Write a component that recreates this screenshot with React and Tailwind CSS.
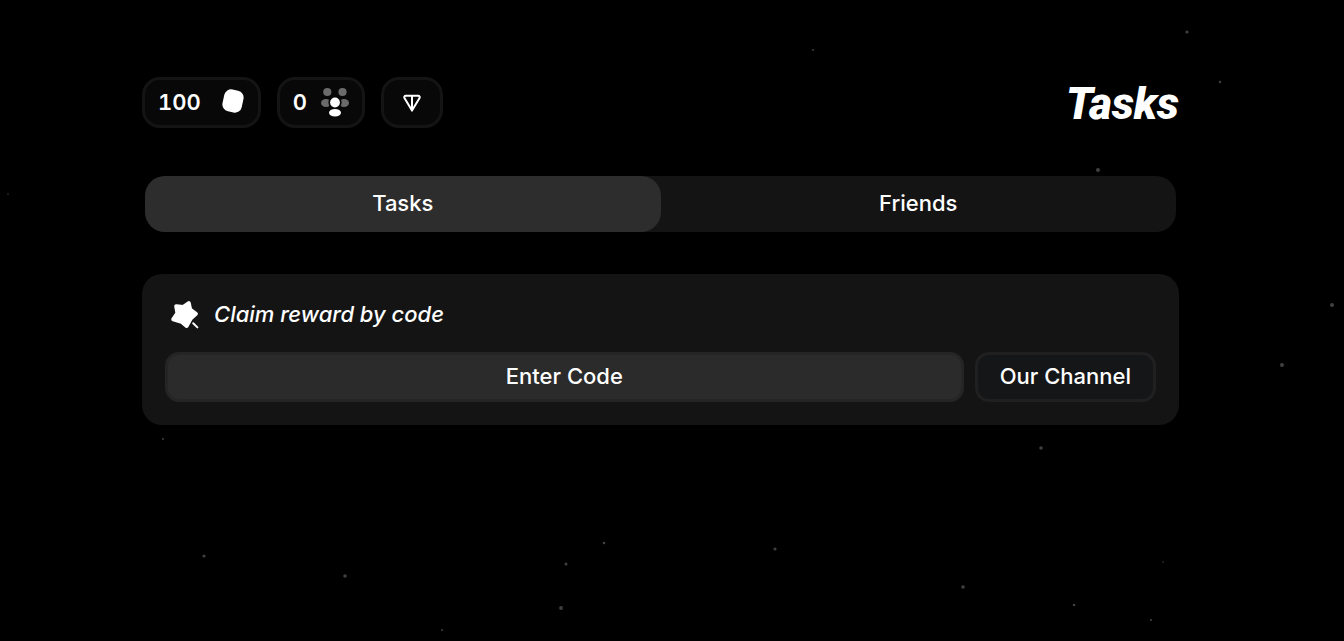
import { useState } from "react";

const stars = [
  [813, 50, 1], [1187, 32, 1.6], [1220, 82, 1.2], [1098, 170, 2], [8, 194, 0.8],
  [1332, 305, 2], [1282, 365, 2], [163, 439, 1], [1041, 448, 1.8], [204, 556, 1.6],
  [345, 576, 1.8], [442, 630, 1], [566, 564, 1.5], [604, 543, 1.3], [561, 608, 1.9],
  [775, 549, 1.6], [963, 587, 1.8], [1074, 605, 1.3], [1163, 562, 0.8], [1151, 620, 1.1],
];

function Starfield() {
  return (
    <svg className="absolute inset-0 h-full w-full pointer-events-none" aria-hidden="true">
      {stars.map(([x, y, r]) => (
        <circle key={`${x}-${y}`} cx={x} cy={y} r={r} fill="#404040" />
      ))}
    </svg>
  );
}

function CoinIcon() {
  return (
    <svg width="24" height="26" viewBox="0 0 24 26" fill="#fff" aria-hidden="true">
      <rect x="2.2" y="0.8" width="19.6" height="22.4" rx="7" transform="rotate(12 12 12)" />
    </svg>
  );
}

function FriendsIcon() {
  return (
    <svg width="28" height="30" viewBox="0 0 28 30" aria-hidden="true">
      <g fill="#6b6b6b">
        <circle cx="6.3" cy="5" r="4.1" />
        <circle cx="21.5" cy="5" r="4.1" />
        <ellipse cx="5" cy="16" rx="5" ry="4" />
        <ellipse cx="23" cy="16" rx="5" ry="4" />
      </g>
      <circle cx="14" cy="15.5" r="6.6" fill="#080808" />
      <circle cx="14" cy="15.5" r="4.9" fill="#fff" />
      <ellipse cx="14" cy="25.8" rx="6" ry="3.8" fill="#fff" />
    </svg>
  );
}

function TonIcon() {
  return (
    <svg
      width="18"
      height="18"
      viewBox="0 0 18 18"
      fill="none"
      stroke="#fff"
      strokeWidth="2"
      strokeLinejoin="round"
      aria-hidden="true"
    >
      <path d="M2.8 1.8H15.2C16.6 1.8 17.1 3.1 16.4 4.3L9 16.6L1.6 4.3C.9 3.1 1.4 1.8 2.8 1.8ZM9 1.8V16.2" />
    </svg>
  );
}

function StarIcon() {
  return (
    <svg width="30" height="30" viewBox="0 0 30 30" aria-hidden="true">
      <path
        d="M6.2 7.2 13.4 8 18.8 4.2 20.2 10.6 25.9 14.8 20.7 19.6 16.6 27 11.6 22.8 3.2 20.3 7.4 14.2Z"
        fill="#fff"
        stroke="#fff"
        strokeWidth="4"
        strokeLinejoin="round"
      />
      <path d="M23.2 24.2 27.4 28.4" stroke="#fff" strokeWidth="2" strokeLinecap="round" />
    </svg>
  );
}

const tabs = ["Tasks", "Friends"];

export default function App() {
  const [active, setActive] = useState("Tasks");

  return (
    <div className="relative min-h-screen bg-black text-white font-['Inter',sans-serif] text-[22px] leading-7">
      <Starfield />

      <main className="relative pl-[142px] pr-[165px] pt-[77px] pb-10">
        {/* Balances */}
        <header className="flex items-center justify-between">
          <div className="flex items-center gap-4">
            <div className="flex h-[51px] items-center gap-5 rounded-[18px] border-3 border-[#141414] bg-[#080808] px-[13px] pb-0.5 font-semibold tabular-nums">
              <span>100</span>
              <CoinIcon />
            </div>
            <div className="flex h-[51px] items-center gap-3.5 rounded-[18px] border-3 border-[#141414] bg-[#080808] px-[13px] pb-0.5 font-semibold tabular-nums">
              <span>0</span>
              <FriendsIcon />
            </div>
            <button
              type="button"
              aria-label="Connect wallet"
              className="flex h-[51px] items-center rounded-[18px] border-3 border-[#141414] bg-[#080808] px-[19px]"
            >
              <TonIcon />
            </button>
          </div>
          <h1 className="pt-1 font-['Roboto',sans-serif] text-[44px] leading-[47px] font-black italic">Tasks</h1>
        </header>

        {/* Tabs */}
        <div role="tablist" className="mx-[3px] mt-12 flex rounded-[20px] bg-[#141414]">
          {tabs.map((tab) => (
            <button
              key={tab}
              type="button"
              role="tab"
              aria-selected={active === tab}
              onClick={() => setActive(tab)}
              className={`h-14 flex-1 rounded-[20px] pb-0.5 font-medium ${active === tab ? "bg-[#2d2d2d]" : ""}`}
            >
              {tab}
            </button>
          ))}
        </div>

        {/* Reward code */}
        <section className="mt-[42px] rounded-[20px] bg-[#141414] px-[23px] pt-[25px] pb-[23px]">
          <div className="flex items-center gap-3.5 pl-[5px]">
            <StarIcon />
            <h2 className="font-medium italic">Claim reward by code</h2>
          </div>
          <div className="mt-[23px] flex gap-[11px]">
            <button
              type="button"
              className="h-[50px] flex-1 rounded-[14px] border-3 border-[#252525] bg-[#2b2b2b] pb-0.5 font-medium"
            >
              Enter Code
            </button>
            <button
              type="button"
              className="h-[50px] rounded-[14px] border-3 border-[#202020] bg-[#151618] px-[22px] pb-0.5 font-medium"
            >
              Our Channel
            </button>
          </div>
        </section>
      </main>
    </div>
  );
}
